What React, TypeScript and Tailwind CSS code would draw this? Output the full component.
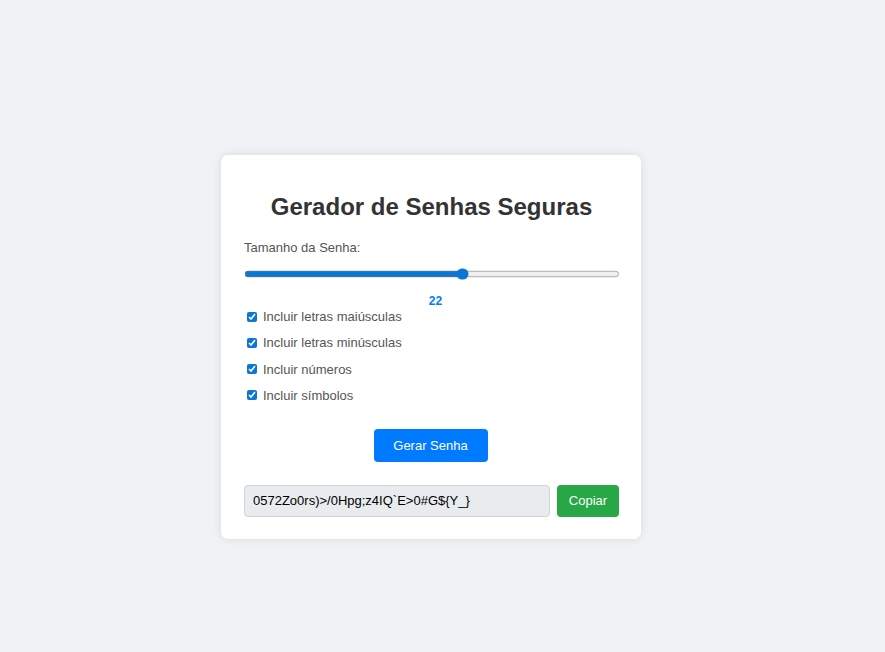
import { useState } from "react";

const options = [
  { key: "upper", label: "Incluir letras maiúsculas" },
  { key: "lower", label: "Incluir letras minúsculas" },
  { key: "numbers", label: "Incluir números" },
  { key: "symbols", label: "Incluir símbolos" },
];

const App: React.FC = () => {
  const [length, setLength] = useState(22);
  const [checked, setChecked] = useState<Record<string, boolean>>({
    upper: true,
    lower: true,
    numbers: true,
    symbols: true,
  });
  const [password] = useState("0572Zo0rs)>/0Hpg;z4IQ`E>0#G${Y_}");

  const toggle = (key: string) => {
    setChecked({ ...checked, [key]: !checked[key] });
  };

  return (
    <div className="min-h-screen w-full bg-[#f0f2f5] pt-[155px] font-['Liberation_Sans',Arial,sans-serif]">
      <div className="ml-[221px] w-[420px] rounded-[7px] bg-white pl-[23px] pr-[22px] pt-[37px] pb-[22px] shadow-[0_0_10px_rgba(0,0,0,0.1)]">
        <h1 className="text-center text-[24px] leading-[30px] font-bold text-[#333]">
          Gerador de Senhas Seguras
        </h1>

        <label className="mt-[17px] block text-[13px] leading-[17px] text-[#555]">
          Tamanho da Senha:
        </label>
        <div className="mt-[9px] h-[16px] w-full">
          {/* native slider drawn at 80% so thumb and track match */}
          <input
            type="range"
            min={8}
            max={32}
            value={length}
            onChange={(e) => setLength(Number(e.target.value))}
            className="m-0 h-[20px] w-[470px] accent-[#0b77d4] [zoom:0.8]"
          />
        </div>
        <div className="mt-[13px] pl-[8px] text-center text-[12px] leading-[14px] font-bold text-[#007bff]">
          {length}
        </div>

        <div className="flex flex-col gap-[9.3px]">
          {options.map((opt) => (
            <label
              key={opt.key}
              className="flex items-center text-[13px] leading-[17px] text-[#555]"
            >
              <input
                type="checkbox"
                checked={checked[opt.key]}
                onChange={() => toggle(opt.key)}
                className="m-0 ml-[3px] mr-[6px] h-[10px] w-[10px] accent-[#0b77d4]"
              />
              {opt.label}
            </label>
          ))}
        </div>

        <div className="mt-[25px] flex justify-center pr-[2px]">
          <button className="h-[33px] w-[114px] rounded-[4px] bg-[#007bff] text-[13px] text-white">
            Gerar Senha
          </button>
        </div>

        <div className="mt-[23px] flex gap-[7px]">
          <input
            type="text"
            readOnly
            value={password}
            className="h-[32px] flex-1 rounded-[4px] border border-[#ced4da] bg-[#e9ecef] px-[8px] text-[13px] text-black outline-none"
          />
          <button className="h-[32px] w-[62px] rounded-[4px] bg-[#28a745] text-[13px] text-white">
            Copiar
          </button>
        </div>
      </div>
    </div>
  );
};

export default App;
